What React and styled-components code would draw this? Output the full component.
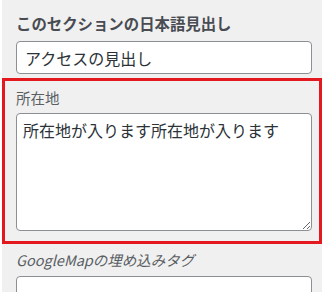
import React from "react";
import styled, { createGlobalStyle } from "styled-components";

const Global = createGlobalStyle`
  html, body { margin: 0; padding: 0; background: #ffffff; }
  body { font-family: "Noto Sans CJK JP", "Noto Sans", sans-serif; }
  * { box-sizing: border-box; }
`;

const Panel = styled.div`
  margin-left: 2px;
  width: 320px;
  height: 292px;
  background: #f0f0f0;
  overflow: hidden;
`;

const Section = styled.div`
  padding: 12px 10px 4px 14px;
`;

const Heading = styled.h2`
  margin: 0 0 7px;
  font-size: 15.4px;
  line-height: 22px;
  font-weight: 700;
  color: #484c52;
`;

const Field = styled.div`
  padding: ${(p) => (p.$highlight ? "7px 8px 10px 11px" : "6px 11px 0 14px")};
  border: ${(p) => (p.$highlight ? "3px solid #e3191f" : "none")};
`;

const Label = styled.div`
  margin: 0 0 ${(p) => (p.$italic ? "6px" : "5px")};
  font-size: 14.5px;
  line-height: 20px;
  color: #5a5e63;
  font-style: ${(p) => (p.$italic ? "italic" : "normal")};
`;

const TextInput = styled.input`
  display: block;
  width: 296px;
  height: 33px;
  padding: 0 8px;
  border: 1px solid #8c8f94;
  border-radius: 4px;
  background: #fff;
  font-family: inherit;
  font-size: 16px;
  color: #2c3338;
  outline: none;
`;

const TextArea = styled.textarea`
  display: block;
  width: 296px;
  height: 118px;
  padding: 4px 6px;
  border: 1px solid #8c8f94;
  border-radius: 4px;
  background: #fff;
  font-family: inherit;
  font-size: 16px;
  line-height: 24px;
  color: #2c3338;
  resize: vertical;
  outline: none;
`;

export default function App() {
  return (
    <>
      <Global />
      <Panel>
        <Section>
          <Heading>このセクションの日本語見出し</Heading>
          <TextInput defaultValue="アクセスの見出し" />
        </Section>
        <Field $highlight>
          <Label>所在地</Label>
          <TextArea defaultValue="所在地が入ります所在地が入ります" />
        </Field>
        <Field>
          <Label $italic>GoogleMapの埋め込みタグ</Label>
          <TextInput />
        </Field>
      </Panel>
    </>
  );
}
